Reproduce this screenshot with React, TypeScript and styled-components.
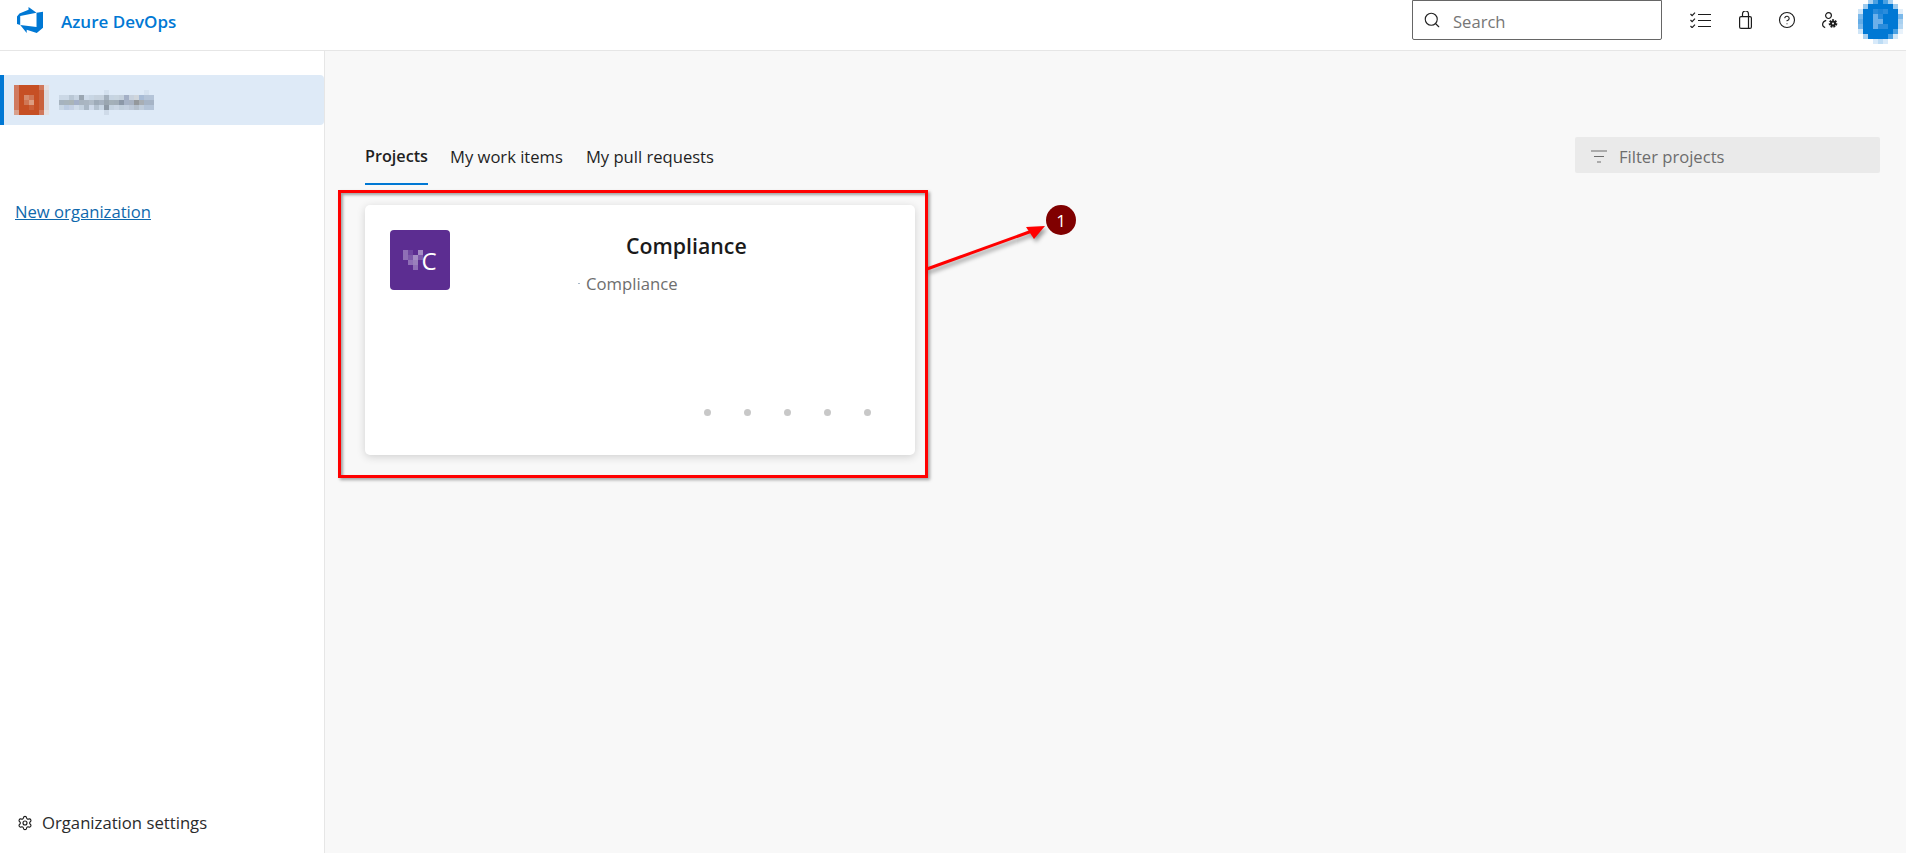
import React from 'react';
import styled, { createGlobalStyle } from 'styled-components';
import { CircleHelp, Search, Settings } from 'lucide-react';

const GlobalStyle = createGlobalStyle`
  html, body {
    margin: 0;
    padding: 0;
    height: 100%;
    background: #ffffff;
    font-family: 'Open Sans', 'Noto Sans', sans-serif;
    overflow: hidden;
  }
`;

const Page = styled.div`
  position: relative;
  width: 1906px;
  height: 853px;
  display: flex;
  flex-direction: column;
  overflow: hidden;
`;

const Header = styled.header`
  height: 50px;
  flex: none;
  display: flex;
  align-items: flex-start;
  padding-left: 17px;
  background: #ffffff;
  border-bottom: 1px solid #e6e6e6;
`;

const Brand = styled.div`
  display: flex;
  align-items: center;
  gap: 18px;
  height: 40px;
  color: #0078d4;
  font-size: 17px;
  font-weight: 600;
`;

const BrandName = styled.span`
  margin-top: 2px;
`;

const HeaderRight = styled.div`
  margin-left: auto;
  display: flex;
  align-items: flex-start;
`;

const SearchBox = styled.div`
  box-sizing: border-box;
  width: 250px;
  height: 40px;
  display: flex;
  align-items: center;
  gap: 12px;
  padding: 2px 0 0 10px;
  border: 1px solid #666666;
  border-radius: 0 0 2px 2px;
  color: #767676;
  font-size: 16.6px;
`;

const SearchGlyph = styled(Search)`
  margin-top: -2px;
`;

const HeaderIcons = styled.div`
  display: flex;
  align-items: center;
  height: 40px;
  margin-left: 28px;
  color: #1c1c1c;
`;

const HelpGlyph = styled(CircleHelp)`
  margin: 0 26px;
`;

const BagSlot = styled.svg`
  margin-left: 28px;
`;

const AvatarSlot = styled.div`
  margin-left: 20px;
  margin-right: 3px;
  height: 44px;
`;

const Body = styled.div`
  flex: 1;
  display: flex;
  min-height: 0;
`;

const Sidebar = styled.aside`
  box-sizing: border-box;
  width: 325px;
  flex: none;
  display: flex;
  flex-direction: column;
  padding-top: 24px;
  background: #ffffff;
  border-right: 1px solid #e6e6e6;
`;

const OrgRow = styled.div`
  height: 50px;
  display: flex;
  align-items: center;
  gap: 10px;
  padding-left: 10px;
  background: #deeaf7;
  border-left: 4px solid #0078d4;
  border-radius: 0 4px 4px 0;
`;

const OrgName = styled.div`
  margin-top: 5px;
`;

const NewOrgLink = styled.a`
  margin: 75px 0 0 15px;
  color: #0f68ac;
  font-size: 16.65px;
  text-decoration: underline;
`;

const SettingsRow = styled.div`
  margin-top: auto;
  margin-bottom: 19px;
  display: flex;
  align-items: center;
  gap: 9px;
  padding-left: 17px;
  color: #2b2b2b;
  font-size: 16.7px;
`;

const Main = styled.main`
  flex: 1;
  display: flex;
  flex-direction: column;
  padding: 86px 26px 0 40px;
  background: #f8f8f8;
`;

const TabBar = styled.div`
  display: flex;
  align-items: flex-start;
  justify-content: space-between;
`;

const Tabs = styled.div`
  display: flex;
  gap: 23px;
`;

const Tab = styled.div<{ $active?: boolean }>`
  height: 48px;
  box-sizing: border-box;
  padding-top: 8px;
  margin-right: ${(p) => (p.$active ? '-1px' : '0')};
  color: #1f1f1f;
  font-size: ${(p) => (p.$active ? '16.2px' : '16.6px')};
  font-weight: ${(p) => (p.$active ? 600 : 400)};
  border-bottom: 2px solid ${(p) => (p.$active ? '#0078d4' : 'transparent')};
`;

const FilterBox = styled.div`
  box-sizing: border-box;
  width: 305px;
  height: 36px;
  display: flex;
  align-items: center;
  gap: 12px;
  padding: 2px 0 0 16px;
  background: #eaeaea;
  border-radius: 2px;
  color: #6d6d6d;
  font-size: 16.6px;
`;

const Card = styled.section`
  box-sizing: border-box;
  width: 550px;
  height: 250px;
  margin-top: 20px;
  display: flex;
  flex-direction: column;
  padding: 25px 44px 39px 25px;
  background: #ffffff;
  border-radius: 5px;
  box-shadow: 0 2px 9px rgba(0, 0, 0, 0.16);
`;

const CardTop = styled.div`
  display: flex;
  gap: 16px;
`;

const ProjectAvatar = styled.div`
  width: 60px;
  height: 60px;
  display: flex;
  align-items: center;
  justify-content: center;
  background: #5c2d91;
  border-radius: 4px;
  color: #ffffff;
  font-size: 24px;
`;

const AvatarLetter = styled.span`
  margin-left: -2px;
`;

const CardText = styled.div`
  display: flex;
  flex-direction: column;
`;

const ProjectTitle = styled.div`
  margin: 1px 0 0 160px;
  color: #1a1a1a;
  font-size: 21.3px;
  font-weight: 600;
`;

const ProjectSub = styled.div`
  margin: 12px 0 0 112px;
  display: flex;
  align-items: center;
  gap: 6px;
  color: #6e6e6e;
  font-size: 16.7px;
`;

const Dash = styled.span`
  width: 2px;
  height: 1px;
  background: #a9b9c9;
`;

const Dots = styled.div`
  margin-top: auto;
  display: flex;
  justify-content: flex-end;
  gap: 33px;
`;

const Dot = styled.span`
  width: 7px;
  height: 7px;
  border-radius: 50%;
  background: #c8c8c8;
`;

const MarkBox = styled.div`
  position: absolute;
  left: 338px;
  top: 190px;
  box-sizing: border-box;
  width: 590px;
  height: 288px;
  border: 3px solid #ff0000;
  box-shadow: 2px 2px 3px rgba(0, 0, 0, 0.35), inset 2px 2px 3px rgba(0, 0, 0, 0.35);
  pointer-events: none;
`;

const MarkArrow = styled.svg`
  position: absolute;
  left: 920px;
  top: 215px;
  overflow: visible;
  filter: drop-shadow(2px 3px 2px rgba(0, 0, 0, 0.4));
`;

const MarkBadge = styled.div`
  position: absolute;
  left: 1046px;
  top: 205px;
  width: 30px;
  height: 30px;
  display: flex;
  align-items: center;
  justify-content: center;
  border-radius: 50%;
  background: #800000;
  color: #ffffff;
  font-size: 17px;
`;

const AzureLogo = () => (
  <svg width="26" height="26" viewBox="0 0 24 24" fill="#0078d4">
    <path d="M0 8.877L2.247 5.91l8.405-3.416V.022l7.37 5.393L2.966 8.338v8.225L0 15.707zm24-4.45v14.651l-5.753 4.9-9.303-3.057v3.056l-5.978-7.416 15.057 1.798V5.415z" />
  </svg>
);

const ChecklistIcon = () => (
  <svg width="21" height="16" viewBox="0 0 21 16" fill="none" stroke="#1c1c1c" strokeWidth="1.2">
    <path d="M0.5 2l1.6 1.6L5 0.6M0.5 8l1.6 1.6L5 6.6M0.5 14l1.6 1.6L5 12.6" />
    <path d="M8 2.5h13M8 8.5h13M8 14.5h13" />
  </svg>
);

const BagIcon = () => (
  <BagSlot width="13" height="18" viewBox="0 0 13 18" fill="none" stroke="#1c1c1c" strokeWidth="1.2">
    <rect x="0.6" y="5.6" width="11.8" height="11.8" rx="1.5" />
    <path d="M3.5 5.6V3a3 3 0 0 1 6 0v2.6M9.5 5.6V17.4" />
  </BagSlot>
);

const UserGearIcon = () => (
  <svg width="16" height="17" viewBox="0 0 16 17" fill="none" stroke="#1c1c1c" strokeWidth="1.2">
    <circle cx="6.5" cy="3.6" r="2.9" />
    <path d="M4.2 8.4C1.8 9.2 0.6 10.8 0.6 12.6c0 1.6 1 2.6 2.6 3" />
    <circle cx="11" cy="11.5" r="3" fill="#1c1c1c" strokeWidth="2.6" strokeDasharray="1.6 1" />
    <circle cx="11" cy="11.5" r="1" fill="#ffffff" stroke="none" />
  </svg>
);

const FilterIcon = () => (
  <svg width="16" height="13" viewBox="0 0 16 13" stroke="#6d6d6d" strokeWidth="1.2">
    <path d="M0 1h16M3 6.5h10M6 12h4" />
  </svg>
);

// blurred bits of the screenshot, drawn cell by cell
const Mosaic: React.FC<{ rows: string[][]; cell?: number; cropTop?: number }> = ({ rows, cell = 5, cropTop = 0 }) => {
  const w = rows[0].length * cell;
  const h = rows.length * cell - cropTop;
  return (
    <svg width={w} height={h} viewBox={`0 ${cropTop} ${w} ${h}`} shapeRendering="crispEdges" style={{ display: 'block' }}>
      {rows.map((row, y) =>
        row.map((c, x) => (c ? <rect key={`${x}-${y}`} x={x * cell} y={y * cell} width={cell} height={cell} fill={c} /> : null)),
      )}
    </svg>
  );
};

const o = '#c64f24';
const e = '#d07a60';
const r = '#c9603c';
const g = '#dcd8dc';
const orgAvatar = [
  [e, o, o, o, o, '#d0785c', '#e6dfe0'],
  [e, o, o, o, o, r, g],
  [e, o, '#d58a6c', '#cf7655', o, r, g],
  [e, o, '#cf7655', '#dc9c80', o, r, g],
  [e, o, o, '#cb5f38', o, r, g],
  ['#d8a08c', o, o, o, o, '#d0785c', '#e6e0e0'],
];

const orgName = [
  ['', '', '', '', '', '', '', '', '', '#d3e0ee', '', '', '', '', '', '', '', '#d5e2f0', ''],
  ['#cbd8e6', '#cbd8e6', '#b9c7d5', '#c7d4e2', '#9aa6b2', '#cedbea', '#c8d6e4', '#c6d2de', '#c6d2de', '#a4b1be', '#c6d4e2', '#c8d5e0', '#c4d0dc', '#a4b0c6', '#c8d2de', '#d0d6dc', '#a8bcd6', '#b4c4d8', '#b4c4d8'],
  ['#a6b3bf', '#a8b4bc', '#aab4b8', '#a4b0c8', '#a8b4c0', '#aab6c2', '#b0bcc8', '#9eabb8', '#a6b2c0', '#9aa6b0', '#a4b0b8', '#a2aeb8', '#8c98a8', '#a6b2c6', '#a8b2c2', '#94989c', '#a8aeb4', '#a6b4c6', '#a6b4c6'],
  ['#c8d6e4', '#bccce2', '#c4d0e4', '#d0dcea', '#c4d2e0', '#aab8c6', '#cedaea', '#b4c2d0', '#c8d6e4', '#8e9aa6', '#c4d2e0', '#cad6e4', '#c0cedc', '#c4d0e0', '#bcc8d8', '#b4bfcc', '#c0cddc', '#b4c4d8', '#b4c4d8'],
  ['', '', '', '', '', '', '', '', '', '#cfdbe9', '', '', '', '', '', '', '', '', ''],
];

const b = '#0078d4';
const userAvatar = [
  ['', '', '#a8d0f0', '#4aa0e2', b, '#4aa0e2', '#a8d0f0', '', ''],
  ['', '#9ccaee', b, b, b, b, b, '#9ccaee', ''],
  ['#cfe5f7', b, b, '#2a8cdc', '#1c84d8', '#2a8cdc', b, b, '#e0eefa'],
  ['#7ab8ea', b, b, '#6cb0ea', '#2a8cdc', b, b, b, '#7ab8ea'],
  ['#64ace6', b, b, '#6cb0ea', '#6cb0ea', b, b, b, '#a8d0f0'],
  ['#7ab8ea', b, b, '#6cb0ea', '#2a8cdc', '#2a8cdc', b, b, '#b4d6f2'],
  ['#cfe5f7', b, b, b, b, b, b, '#4aa0e2', '#e8f2fb'],
  ['', '#a8d0f0', b, b, b, b, '#4aa0e2', '#d0e6f7', ''],
  ['', '', '', '#d8eafa', '#bcdcf5', '#d8eafa', '', '', ''],
];

const p = '#5c2d91';
const avatarLetter = [
  ['#8f6fb6', '#6f46a0', p, '#a48cc4'],
  ['#8f6fb6', '#7d58aa', '#a48cc4', '#7d58aa'],
  [p, '#8f6fb6', '#9a80bc', p],
  [p, p, '#8f6fb6', p],
];

const App: React.FC = () => (
  <Page>
    <GlobalStyle />
    <Header>
      <Brand>
        <AzureLogo />
        <BrandName>Azure DevOps</BrandName>
      </Brand>
      <HeaderRight>
        <SearchBox>
          <SearchGlyph size={18} strokeWidth={1.5} color="#222222" />
          Search
        </SearchBox>
        <HeaderIcons>
          <ChecklistIcon />
          <BagIcon />
          <HelpGlyph size={18} strokeWidth={1.5} />
          <UserGearIcon />
        </HeaderIcons>
        <AvatarSlot>
          <Mosaic rows={userAvatar} cropTop={1} />
        </AvatarSlot>
      </HeaderRight>
    </Header>
    <Body>
      <Sidebar>
        <OrgRow>
          <Mosaic rows={orgAvatar} />
          <OrgName>
            <Mosaic rows={orgName} />
          </OrgName>
        </OrgRow>
        <NewOrgLink>New organization</NewOrgLink>
        <SettingsRow>
          <Settings size={16} strokeWidth={1.7} color="#1c1c1c" />
          Organization settings
        </SettingsRow>
      </Sidebar>
      <Main>
        <TabBar>
          <Tabs>
            <Tab $active>Projects</Tab>
            <Tab>My work items</Tab>
            <Tab>My pull requests</Tab>
          </Tabs>
          <FilterBox>
            <FilterIcon />
            Filter projects
          </FilterBox>
        </TabBar>
        <Card>
          <CardTop>
            <ProjectAvatar>
              <Mosaic rows={avatarLetter} />
              <AvatarLetter>C</AvatarLetter>
            </ProjectAvatar>
            <CardText>
              <ProjectTitle>Compliance</ProjectTitle>
              <ProjectSub>
                <Dash />
                Compliance
              </ProjectSub>
            </CardText>
          </CardTop>
          <Dots>
            <Dot />
            <Dot />
            <Dot />
            <Dot />
            <Dot />
          </Dots>
        </Card>
      </Main>
    </Body>
    <MarkBox />
    <MarkArrow width="130" height="60" viewBox="0 0 130 60">
      <path d="M7 54L112 16" stroke="#ff0000" strokeWidth="3" fill="none" />
      <path d="M125 11L106 12L114 24Z" fill="#ff0000" />
    </MarkArrow>
    <MarkBadge>1</MarkBadge>
  </Page>
);

export default App;
